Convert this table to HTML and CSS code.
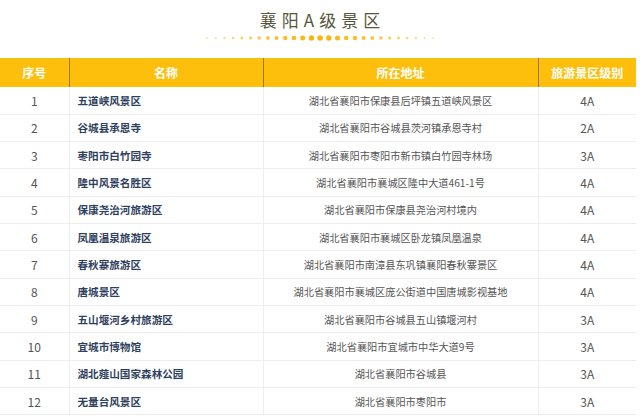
FILE: index.html
```html
<!DOCTYPE html>
<html lang="zh">
<head>
<meta charset="utf-8">
<link rel="stylesheet" href="styles.css">
</head>
<body>
<div class="title-block">
  <h1 class="title">襄阳A级景区</h1>
  <svg class="dots" width="240" height="8" viewBox="0 0 240 8">
    <g fill="#f6b80e">
      <circle cx="7" cy="4" r="0.9" opacity="0.45"/>
      <circle cx="15.7" cy="4" r="1.0" opacity="0.5"/>
      <circle cx="24.4" cy="4" r="1.15" opacity="0.55"/>
      <circle cx="33.1" cy="4" r="1.3" opacity="0.6"/>
      <circle cx="41.8" cy="4" r="1.45" opacity="0.65"/>
      <circle cx="50.5" cy="4" r="1.6" opacity="0.7"/>
      <circle cx="59.2" cy="4" r="1.75" opacity="0.75"/>
      <circle cx="67.9" cy="4" r="1.9" opacity="0.8"/>
      <circle cx="76.6" cy="4" r="2.05" opacity="0.85"/>
      <circle cx="85.3" cy="4" r="2.2" opacity="0.9"/>
      <circle cx="94" cy="4" r="2.35" opacity="0.93"/>
      <circle cx="102.7" cy="4" r="2.5" opacity="0.96"/>
      <circle cx="111.4" cy="4" r="2.65"/>
      <circle cx="120.1" cy="4" r="2.8"/>
      <circle cx="128.8" cy="4" r="2.65"/>
      <circle cx="137.5" cy="4" r="2.5" opacity="0.96"/>
      <circle cx="146.2" cy="4" r="2.35" opacity="0.93"/>
      <circle cx="154.9" cy="4" r="2.2" opacity="0.9"/>
      <circle cx="163.6" cy="4" r="2.05" opacity="0.85"/>
      <circle cx="172.3" cy="4" r="1.9" opacity="0.8"/>
      <circle cx="181" cy="4" r="1.75" opacity="0.75"/>
      <circle cx="189.7" cy="4" r="1.6" opacity="0.7"/>
      <circle cx="198.4" cy="4" r="1.45" opacity="0.65"/>
      <circle cx="207.1" cy="4" r="1.3" opacity="0.6"/>
      <circle cx="215.8" cy="4" r="1.15" opacity="0.55"/>
      <circle cx="224.5" cy="4" r="1.0" opacity="0.5"/>
      <circle cx="233.2" cy="4" r="0.9" opacity="0.45"/>
    </g>
  </svg>
</div>
<table class="tbl">
  <colgroup>
    <col class="c1"><col class="c2"><col class="c3"><col class="c4">
  </colgroup>
  <thead>
    <tr><th>序号</th><th>名称</th><th>所在地址</th><th>旅游景区级别</th></tr>
  </thead>
  <tbody>
    <tr><td>1</td><td class="name">五道峡风景区</td><td class="addr">湖北省襄阳市保康县后坪镇五道峡风景区</td><td>4A</td></tr>
    <tr><td>2</td><td class="name">谷城县承恩寺</td><td class="addr">湖北省襄阳市谷城县茨河镇承恩寺村</td><td>2A</td></tr>
    <tr><td>3</td><td class="name">枣阳市白竹园寺</td><td class="addr">湖北省襄阳市枣阳市新市镇白竹园寺林场</td><td>3A</td></tr>
    <tr><td>4</td><td class="name">隆中风景名胜区</td><td class="addr">湖北省襄阳市襄城区隆中大道461-1号</td><td>4A</td></tr>
    <tr><td>5</td><td class="name">保康尧治河旅游区</td><td class="addr">湖北省襄阳市保康县尧治河村境内</td><td>4A</td></tr>
    <tr><td>6</td><td class="name">凤凰温泉旅游区</td><td class="addr">湖北省襄阳市襄城区卧龙镇凤凰温泉</td><td>4A</td></tr>
    <tr><td>7</td><td class="name">春秋寨旅游区</td><td class="addr">湖北省襄阳市南漳县东巩镇襄阳春秋寨景区</td><td>4A</td></tr>
    <tr><td>8</td><td class="name">唐城景区</td><td class="addr">湖北省襄阳市襄城区庞公街道中国唐城影视基地</td><td>4A</td></tr>
    <tr><td>9</td><td class="name">五山堰河乡村旅游区</td><td class="addr">湖北省襄阳市谷城县五山镇堰河村</td><td>3A</td></tr>
    <tr><td>10</td><td class="name">宜城市博物馆</td><td class="addr">湖北省襄阳市宜城市中华大道9号</td><td>3A</td></tr>
    <tr><td>11</td><td class="name">湖北薤山国家森林公园</td><td class="addr">湖北省襄阳市谷城县</td><td>3A</td></tr>
    <tr><td>12</td><td class="name">无量台风景区</td><td class="addr">湖北省襄阳市枣阳市</td><td>3A</td></tr>
  </tbody>
</table>
</body>
</html>
```

FILE: styles.css
```css
html, body {
  margin: 0;
  padding: 0;
  background: #ffffff;
  font-family: "Noto Sans CJK SC", "Noto Sans", sans-serif;
}

.title-block {
  height: 58px;
  display: flex;
  flex-direction: column;
  align-items: center;
}

.title {
  margin: 8px 0 0 0;
  padding-left: 5px;
  font-size: 17px;
  line-height: 24px;
  font-weight: 400;
  letter-spacing: 5px;
  color: #56563a;
}

.dots {
  display: block;
  margin-top: 2px;
  margin-left: -1px;
}

.tbl {
  width: 636px;
  border-collapse: collapse;
  table-layout: fixed;
}

.c1 { width: 69px; }
.c2 { width: 194px; }
.c3 { width: 275px; }
.c4 { width: 98px; }

.tbl th {
  height: 29px;
  padding: 0;
  background: #fdbf0c;
  color: #ffffff;
  font-size: 12px;
  font-weight: 700;
  text-align: center;
  border-left: 1px solid #9c7a12;
}

.tbl th:first-child { border-left: none; }

.tbl td {
  height: 27.33px;
  padding: 0;
  box-sizing: border-box;
  font-size: 12px;
  color: #555555;
  text-align: center;
  border-bottom: 1px solid #eeeeee;
  border-left: 1px solid #eeeeee;
  white-space: nowrap;
}

.tbl td:first-child { border-left: none; }

.tbl td.name {
  text-align: left;
  padding-left: 8px;
  font-size: 10.6px;
  font-weight: 700;
  color: #2f3f5e;
}

.tbl td.addr {
  font-size: 10.2px;
  color: #555555;
}
```
